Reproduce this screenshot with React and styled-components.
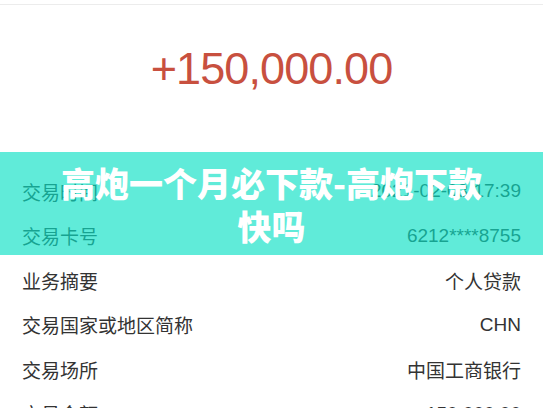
import React from "react";
import styled, { createGlobalStyle } from "styled-components";

const Global = createGlobalStyle`
  html, body { margin: 0; padding: 0; background: #ffffff; }
  body { font-family: "Liberation Sans", "Noto Sans CJK SC", sans-serif; }
`;

const Page = styled.div`
  position: relative;
  width: 543px;
  height: 408px;
  overflow: hidden;
  background: #ffffff;
`;

const TopBar = styled.div`
  height: 4px;
  border-bottom: 1px solid #ececec;
`;

const AmountSection = styled.div`
  height: 123px;
  padding-top: 41px;
  display: flex;
  justify-content: center;
`;

const Amount = styled.div`
  font-family: "Liberation Sans", Arial, sans-serif;
  font-size: 45px;
  line-height: 1;
  letter-spacing: -0.9px;
  color: #c8503f;
`;

const List = styled.div`
  display: flex;
  flex-direction: column;
`;

const Row = styled.div`
  height: 44.5px;
  padding: 0 22px;
  display: flex;
  align-items: center;
  justify-content: space-between;
  font-family: "Liberation Sans", "Noto Sans CJK SC", sans-serif;
  font-size: 19px;
  color: #333333;
`;

const Label = styled.span``;
const Value = styled.span``;

const Overlay = styled.div`
  position: absolute;
  left: 0;
  right: 0;
  top: 152px;
  height: 103px;
  background: rgba(10, 224, 196, 0.65);
  display: flex;
  align-items: center;
  justify-content: center;
`;

const Title = styled.h1`
  margin: 0;
  max-width: 440px;
  text-align: center;
  font-family: "Noto Sans CJK SC", sans-serif;
  font-weight: 900;
  font-size: 34px;
  line-height: 43px;
  color: #ffffff;
`;

const rows = [
  ["交易时间", "2021-02-03 17:39"],
  ["交易卡号", "6212****8755"],
  ["业务摘要", "个人贷款"],
  ["交易国家或地区简称", "CHN"],
  ["交易场所", "中国工商银行"],
  ["交易金额", "150,000.00"],
];

export default function App() {
  return (
    <Page>
      <Global />
      <TopBar />
      <AmountSection>
        <Amount>+150,000.00</Amount>
      </AmountSection>
      <List>
        {rows.map(([l, v]) => (
          <Row key={l}>
            <Label>{l}</Label>
            <Value>{v}</Value>
          </Row>
        ))}
      </List>
      <Overlay>
        <Title>高炮一个月必下款-高炮下款快吗</Title>
      </Overlay>
    </Page>
  );
}
